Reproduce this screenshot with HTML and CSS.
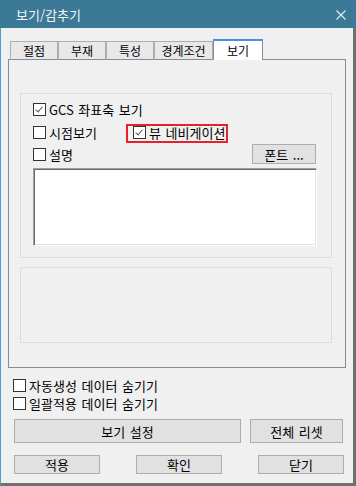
FILE: index.html
```html
<!DOCTYPE html>
<html lang="ko">

<head>
    <meta charset="UTF-8">
    <meta name="viewport" content="width=device-width, initial-scale=1.0">
    <title>보기/감추기</title>
    <link rel="stylesheet" href="styles.css">
</head>

<body>
    <div class="window">
        <div class="titlebar">
            <span class="title">보기/감추기</span>
            <svg class="close" width="10" height="10" viewBox="0 0 10 10">
                <path d="M0.5 0.5 L9.5 9.5 M9.5 0.5 L0.5 9.5" stroke="#e6eef3" stroke-width="1.1" fill="none" />
            </svg>
        </div>
        <div class="frame">
            <!-- 탭 -->
            <div class="tabs">
                <div class="tab w48">절점</div>
                <div class="tab w48">부재</div>
                <div class="tab w48">특성</div>
                <div class="tab w59">경계조건</div>
                <div class="tab active">보기</div>
            </div>
            <div class="panel">
                <div class="group">
                    <div class="row">
                        <label class="check"><span class="box on"></span>GCS 좌표축 보기</label>
                    </div>
                    <div class="row row2">
                        <label class="check first"><span class="box"></span>시점보기</label>
                        <label class="check marked"><span class="box on"></span>뷰 네비게이션</label>
                    </div>
                    <div class="row row3">
                        <label class="check"><span class="box"></span>설명</label>
                        <button class="btn font-btn">폰트 ...</button>
                    </div>
                    <div class="memo"></div>
                </div>
                <div class="group empty"></div>
            </div>

            <div class="options">
                <label class="check"><span class="box"></span>자동생성 데이터 숨기기</label>
                <label class="check"><span class="box"></span>일괄적용 데이터 숨기기</label>
            </div>

            <div class="actions">
                <button class="btn big wide">보기 설정</button>
                <button class="btn big reset">전체 리셋</button>
            </div>
            <div class="footer">
                <button class="btn small">적용</button>
                <button class="btn small">확인</button>
                <button class="btn small">닫기</button>
            </div>
        </div>
    </div>
</body>

</html>
```

FILE: styles.css
```css
* {
    box-sizing: border-box;
}

body {
    margin: 0;
    background: #f0f0f0;
    font-family: "Noto Sans CJK KR", "Liberation Sans", sans-serif;
    font-size: 13px;
    color: #000;
}

.window {
    width: 356px;
    height: 486px;
    display: flex;
    flex-direction: column;
    background: #f0f0f0;
}

.titlebar {
    height: 28px;
    flex: none;
    background: #3b7997;
    display: flex;
    align-items: center;
    justify-content: space-between;
    padding: 0 10px 0 16px;
}

.title {
    color: #f2f6f8;
    font-size: 13px;
}

.close {
    display: block;
    margin-top: 2px;
}

.frame {
    flex: 1;
    border-left: 1px solid #4d9ed3;
    border-right: 3px solid #707070;
    border-bottom: 3px solid #707070;
    padding: 11px 7px 0 7px;
}

/* 탭 */
.tabs {
    display: flex;
    align-items: flex-end;
    height: 21px;
    padding-left: 2px;
    margin-bottom: -1px;
    position: relative;
    z-index: 1;
    font-size: 12px;
}

.tab {
    height: 19px;
    background: #e8e8e8;
    border: 1px solid #adadad;
    border-bottom-color: #898a99;
    display: flex;
    align-items: center;
    justify-content: center;
    line-height: 1;
    padding-top: 1px;
}

.w48 {
    width: 48px;
}

.w59 {
    width: 59px;
}

.tab.active {
    width: 50px;
    height: 21px;
    background: #fff;
    border-color: #898a99;
    border-top: 2px solid #4a8fe6;
    border-bottom: none;
    padding-top: 0;
}

.panel {
    border: 1px solid #898a99;
    padding: 33px 13px 24px 11px;
}

.group {
    border: 1px solid #dcdcdc;
    padding: 5px 14px 11px 12px;
}

.group.empty {
    height: 76px;
    margin-top: 9px;
}

.row {
    display: flex;
    align-items: center;
    height: 20px;
}

.row2 {
    margin-top: 3px;
}

.row3 {
    margin-top: 2px;
}

.check {
    display: flex;
    align-items: center;
    white-space: nowrap;
    word-spacing: 1px;
    line-height: 1;
}

.check.first {
    width: 100px;
}

.check.marked {
    position: relative;
}

/* 빨간 강조 표시 */
.check.marked::after {
    content: "";
    position: absolute;
    left: -7px;
    top: -2px;
    right: -3px;
    bottom: -4px;
    border: 2px solid #e8202a;
}

.box {
    width: 13px;
    height: 13px;
    border: 1px solid #333;
    background: #fff;
    margin-right: 3px;
    flex: none;
    position: relative;
}

.box.on::after {
    content: "";
    position: absolute;
    left: 3px;
    top: 1px;
    width: 3px;
    height: 6px;
    border-right: 1.5px solid #555;
    border-bottom: 1.5px solid #555;
    transform: rotate(40deg);
}

.btn {
    font-family: inherit;
    font-size: 13px;
    word-spacing: 1px;
    color: #000;
    background: #e1e1e1;
    border: 1px solid #adadad;
    padding: 0;
    margin: 0;
    line-height: 1;
}

.font-btn {
    width: 64px;
    height: 20px;
    margin-left: auto;
    margin-right: 1px;
}

.memo {
    margin-top: 4px;
    height: 78px;
    background: #fff;
    border: 1px solid;
    border-color: #a0a0a0 #fff #fff #a0a0a0;
    box-shadow: inset 1px 1px 0 #696969, inset -1px -1px 0 #e3e3e3;
}

.options {
    margin-top: 8px;
    padding-left: 5px;
}

.options .check {
    height: 18px;
}

.actions {
    display: flex;
    margin-top: 7px;
    padding: 0 3px 0 6px;
    gap: 9px;
}

.big {
    height: 24px;
}

.wide {
    width: 227px;
}

.reset {
    flex: 1;
}

.footer {
    display: flex;
    justify-content: space-between;
    margin-top: 12px;
    padding: 0 2px 0 6px;
}

.small {
    width: 86px;
    height: 19px;
}
```
